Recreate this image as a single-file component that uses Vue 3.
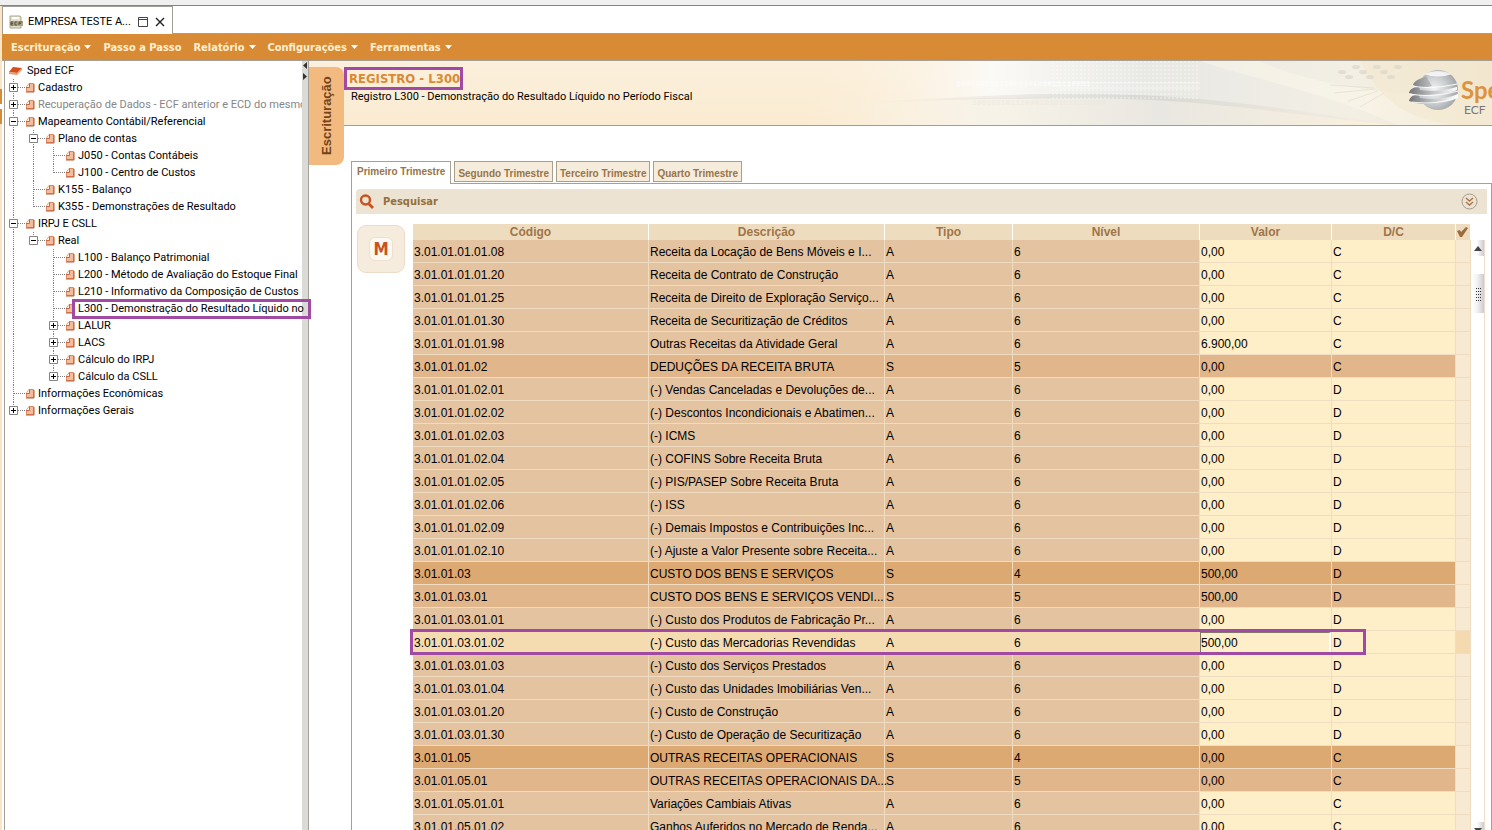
<script setup>
import { ref } from 'vue'

const menus = [
  { label: 'Escrituração', drop: true },
  { label: 'Passo a Passo', drop: false },
  { label: 'Relatório', drop: true },
  { label: 'Configurações', drop: true },
  { label: 'Ferramentas', drop: true },
]

// guides: one entry per indent column: 'v' full line, 't' branch, 'l' last branch, '' blank
const tree = [
  { label: 'Cadastro', guides: ['t'], box: '+' },
  { label: 'Recuperação de Dados - ECF anterior e ECD do mesmo', guides: ['t'], box: '+', dim: true },
  { label: 'Mapeamento Contábil/Referencial', guides: ['t'], box: '-' },
  { label: 'Plano de contas', guides: ['v', 't'], box: '-' },
  { label: 'J050 - Contas Contábeis', guides: ['v', 'v', 't'] },
  { label: 'J100 - Centro de Custos', guides: ['v', 'v', 'l'] },
  { label: 'K155 - Balanço', guides: ['v', 't'] },
  { label: 'K355 - Demonstrações de Resultado', guides: ['v', 'l'] },
  { label: 'IRPJ E CSLL', guides: ['t'], box: '-' },
  { label: 'Real', guides: ['v', 'l'], box: '-' },
  { label: 'L100 - Balanço Patrimonial', guides: ['v', '', 't'] },
  { label: 'L200 - Método de Avaliação do Estoque Final', guides: ['v', '', 't'] },
  { label: 'L210 - Informativo da Composição de Custos', guides: ['v', '', 't'] },
  { label: 'L300 - Demonstração do Resultado Líquido no', guides: ['v', '', 't'], selected: true },
  { label: 'LALUR', guides: ['v', '', 't'], box: '+' },
  { label: 'LACS', guides: ['v', '', 't'], box: '+' },
  { label: 'Cálculo do IRPJ', guides: ['v', '', 't'], box: '+' },
  { label: 'Cálculo da CSLL', guides: ['v', '', 'l'], box: '+' },
  { label: 'Informações Econômicas', guides: ['t'] },
  { label: 'Informações Gerais', guides: ['l'], box: '+' },
]

const tabs = ['Primeiro Trimestre', 'Segundo Trimestre', 'Terceiro Trimestre', 'Quarto Trimestre']
const activeTab = ref(0)

const rows = [
  ['3.01.01.01.01.08', 'Receita da Locação de Bens Móveis e I...', 'A', 6, '0,00', 'C'],
  ['3.01.01.01.01.20', 'Receita de Contrato de Construção', 'A', 6, '0,00', 'C'],
  ['3.01.01.01.01.25', 'Receita de Direito de Exploração Serviço...', 'A', 6, '0,00', 'C'],
  ['3.01.01.01.01.30', 'Receita de Securitização de Créditos', 'A', 6, '0,00', 'C'],
  ['3.01.01.01.01.98', 'Outras Receitas da Atividade Geral', 'A', 6, '6.900,00', 'C'],
  ['3.01.01.01.02', 'DEDUÇÕES DA RECEITA BRUTA', 'S', 5, '0,00', 'C'],
  ['3.01.01.01.02.01', '(-) Vendas Canceladas e Devoluções de...', 'A', 6, '0,00', 'D'],
  ['3.01.01.01.02.02', '(-) Descontos Incondicionais e Abatimen...', 'A', 6, '0,00', 'D'],
  ['3.01.01.01.02.03', '(-) ICMS', 'A', 6, '0,00', 'D'],
  ['3.01.01.01.02.04', '(-) COFINS Sobre Receita Bruta', 'A', 6, '0,00', 'D'],
  ['3.01.01.01.02.05', '(-) PIS/PASEP Sobre Receita Bruta', 'A', 6, '0,00', 'D'],
  ['3.01.01.01.02.06', '(-) ISS', 'A', 6, '0,00', 'D'],
  ['3.01.01.01.02.09', '(-) Demais Impostos e Contribuições Inc...', 'A', 6, '0,00', 'D'],
  ['3.01.01.01.02.10', '(-) Ajuste a Valor Presente sobre Receita...', 'A', 6, '0,00', 'D'],
  ['3.01.01.03', 'CUSTO DOS BENS E SERVIÇOS', 'S', 4, '500,00', 'D'],
  ['3.01.01.03.01', 'CUSTO DOS BENS E SERVIÇOS VENDI...', 'S', 5, '500,00', 'D'],
  ['3.01.01.03.01.01', '(-) Custo dos Produtos de Fabricação Pr...', 'A', 6, '0,00', 'D'],
  ['3.01.01.03.01.02', '(-) Custo das Mercadorias Revendidas', 'A', 6, '500,00', 'D'],
  ['3.01.01.03.01.03', '(-) Custo dos Serviços Prestados', 'A', 6, '0,00', 'D'],
  ['3.01.01.03.01.04', '(-) Custo das Unidades Imobiliárias Ven...', 'A', 6, '0,00', 'D'],
  ['3.01.01.03.01.20', '(-) Custo de Construção', 'A', 6, '0,00', 'D'],
  ['3.01.01.03.01.30', '(-) Custo de Operação de Securitização', 'A', 6, '0,00', 'D'],
  ['3.01.01.05', 'OUTRAS RECEITAS OPERACIONAIS', 'S', 4, '0,00', 'C'],
  ['3.01.01.05.01', 'OUTRAS RECEITAS OPERACIONAIS DA...', 'S', 5, '0,00', 'C'],
  ['3.01.01.05.01.01', 'Variações Cambiais Ativas', 'A', 6, '0,00', 'C'],
  ['3.01.01.05.01.02', 'Ganhos Auferidos no Mercado de Renda...', 'A', 6, '0,00', 'C'],
]
const editing = 17
const editValue = ref('500,00')
</script>

<template>
  <div class="window">
    <div class="topband"></div>
    <div class="body">
      <div class="edge"></div>
      <div class="app">
        <div class="doc-tabs">
          <div class="doc-tab">
            <svg class="doc-icon" width="15" height="14" viewBox="0 0 15 14">
              <path d="M1 1h10l1 1v11H1z" fill="#e4e0cc" stroke="#aaa58c" />
              <path d="M3 3h7" stroke="#fff" stroke-width="2" />
              <path d="M1 6h13v5H1z" fill="#aaa486" />
              <path d="M4 7H2v3h2M2 8.500h2M8 7H6v3h2M10 10V7h3M10 8.500h2" fill="none" stroke="#5b5740" />
            </svg>
            <span class="doc-title">EMPRESA TESTE A...</span>
            <button class="win-btn" aria-label="Restaurar">
              <svg width="11" height="10" viewBox="0 0 11 10"><path d="M.5.5h9v9h-9zM0 2.500h10" fill="none" stroke="#444" /></svg>
            </button>
            <button class="win-btn close" aria-label="Fechar">
              <svg width="10" height="10" viewBox="0 0 10 10"><path d="M1 1l8 8M9 1L1 9" stroke="#222" stroke-width="1.400" /></svg>
            </button>
          </div>
        </div>

        <nav class="menubar">
          <button v-for="m in menus" :key="m.label" class="menu">
            {{ m.label }}<svg v-if="m.drop" width="7" height="4" viewBox="0 0 7 4"><path d="M0 0h7L3.500 4z" fill="#fff" /></svg>
          </button>
        </nav>

        <div class="main">
          <aside class="tree">
            <div class="node root">
              <svg width="15" height="10" viewBox="0 0 15 10"><path d="M5 1l9 1-5 5-8-1z" fill="#d2501e" /><path d="M1 6l8 1 5-5v2L9 9 1 8z" fill="#e99a72" /></svg>
              <span>Sped ECF</span>
            </div>
            <div v-for="n in tree" :key="n.label" class="node">
              <span v-for="(g, i) in n.guides" :key="i" class="guide">
                <svg width="20" height="17" viewBox="0 0 20 17">
                  <path v-if="g" :d="g === 'l' ? 'M8.500 0V9' : 'M8.500 0V17'" class="dots" />
                  <path v-if="g === 't' || g === 'l'" d="M9 8.500H20" class="dots" />
                  <g v-if="n.box && i === n.guides.length - 1">
                    <path d="M4.500 4.500h8v8h-8z" fill="#fff" stroke="#848484" />
                    <path :d="n.box === '+' ? 'M6 8.500h5M8.500 6v5' : 'M6 8.500h5'" stroke="#000" fill="none" />
                  </g>
                </svg>
              </span>
              <svg class="leaf" width="10" height="10" viewBox="0 0 10 10">
                <path d="M4 .5h4.500v8H1.500V4z" fill="#f0bd9f" stroke="#d98a64" />
                <path d="M1 4.500h3.500V.5" fill="#fff4ec" stroke="#c9643c" />
                <path d="M9 1v8H1" stroke="#c4572c" fill="none" />
              </svg>
              <a href="#" class="label" :class="{ dim: n.dim, selected: n.selected }">{{ n.label }}<i v-if="n.selected" class="mark"></i></a>
            </div>
          </aside>
          <div class="splitter">
            <svg width="6" height="20" viewBox="0 0 6 20"><path d="M5 1v7L1 4.500z M1 12v7l4-3.500z" fill="#333" /></svg>
          </div>

          <section class="content">
            <header class="banner">
              <svg class="art" width="692" height="65" viewBox="0 0 692 65">
                <defs>
                  <linearGradient id="fade" x1="0" x2="1">
                    <stop offset="0" stop-color="#fbeed8" stop-opacity="0" />
                    <stop offset=".28" stop-color="#fbfaf6" />
                    <stop offset=".5" stop-color="#e8e8e5" />
                    <stop offset=".6" stop-color="#ebeae4" />
                    <stop offset=".8" stop-color="#f3efe4" />
                    <stop offset="1" stop-color="#efe3cc" />
                  </linearGradient>
                  <linearGradient id="under" x1="0" x2="1">
                    <stop offset="0" stop-color="#fbeed8" stop-opacity="0" />
                    <stop offset=".35" stop-color="#f6f2e8" />
                    <stop offset=".6" stop-color="#e9e7e1" />
                    <stop offset="1" stop-color="#fbf1de" />
                  </linearGradient>
                  <linearGradient id="wave" x1="0" x2="1">
                    <stop offset="0" stop-color="#cfccc4" stop-opacity="0" />
                    <stop offset=".55" stop-color="#cfcec9" />
                    <stop offset="1" stop-color="#e6e2d7" stop-opacity=".2" />
                  </linearGradient>
                  <radialGradient id="ball" cx=".4" cy=".5" r=".65">
                    <stop offset="0" stop-color="#f4f5f5" />
                    <stop offset=".5" stop-color="#cccfd1" />
                    <stop offset="1" stop-color="#9a9da0" />
                  </radialGradient>
                  <linearGradient id="fin" x1="0" x2="1">
                    <stop offset="0" stop-color="#727477" />
                    <stop offset=".5" stop-color="#c4c6c8" />
                    <stop offset="1" stop-color="#fff" />
                  </linearGradient>
                  <pattern id="dotgrid" width="4" height="4" patternUnits="userSpaceOnUse"><path d="M0 0h2v2H0z" fill="#fff" fill-opacity=".3" /></pattern>
                </defs>
                <path d="M0 0h692v65H0z" fill="url(#fade)" />
                <path d="M0 42C80 41 160 36 250 36S400 38 450 45S560 60 600 65H0z" fill="url(#under)" />
                <path d="M60 42C160 36 220 32 300 33S460 42 590 64C500 54 420 42 350 39S160 38 60 42z" fill="url(#wave)" opacity=".6" />
                <path d="M250 0h148v38H250z" fill="url(#dotgrid)" />
                <path d="M240 22h160M260 27h140" stroke="#fff" stroke-width="2" opacity=".3" />
                <path d="M400 0c60 20 120 30 200 65h92V34C600 40 500 20 460 0z" fill="#fdf8ec" opacity=".45" />
                <path d="M572 20c20 26 40 38 80 44h40V0H560z" fill="#f3e7cf" opacity=".6" />
                <g fill="#ddd7ca" opacity=".7">
                  <ellipse v-for="i in 9" :key="i" :cx="535 + i * 7" :cy="6 + (i % 3) * 5" rx="4" ry="2" />
                </g>
                <g stroke="#e3ddcf" fill="none" opacity=".7"><path d="M530 24l44 3M534 32l40-4M548 40l30-10M560 46l24-14" /></g>
                <g class="binary">
                  <text x="156" y="25" fill="#fff">1001001011100010101011110001</text>
                  <text x="172" y="44" fill="#ece9e1">1001001011100010101011110001</text>
                </g>
                <circle cx="638" cy="29" r="20" fill="url(#ball)" />
                <path d="M624 13q14-6 28 0-14 5-28 0z" fill="#fff" opacity=".8" />
                <path d="M613 24c1-5 8-6 13-9l6 10c-7 2-15 2-19-1zM609 32c1-5 6-6 10-6l1 3c14 2 26 0 37-3v3c-14 5-36 7-48 3zM609 40c1-5 6-7 10-6l1 3c14 2 26 1 38-4v4c-14 6-36 8-49 3z" fill="url(#fin)" />
                <path d="M613 25c14 3 30 1 44-2M610 33c16 3 34 1 48-3M612 41c16 2 32 1 44-5" stroke="#fff" stroke-opacity=".9" fill="none" />
                <text x="661" y="38" class="sped">Sped</text>
                <text x="664" y="53" class="ecf">ECF</text>
              </svg>
              <div class="titles">
                <h1>REGISTRO - L300<i class="mark"></i></h1>
                <p>Registro L300 - Demonstração do Resultado Líquido no Período Fiscal</p>
              </div>
            </header>
            <button class="side-tab">Escrituração</button>

            <div class="work">
              <div class="tabs" role="tablist">
                <button v-for="(t, i) in tabs" :key="t" role="tab" class="tab" :class="{ active: i === activeTab }" :aria-selected="i === activeTab" @click="activeTab = i">{{ t }}</button>
              </div>
              <div class="panel">
                <div class="search">
                  <svg width="16" height="16" viewBox="0 0 16 16"><circle cx="6.500" cy="6" r="4.500" fill="none" stroke="#c9521f" stroke-width="2.400" /><path d="M9.500 9.500L14 14" stroke="#c9521f" stroke-width="2.800" /></svg>
                  <span>Pesquisar</span>
                  <button class="expand" aria-label="Expandir">
                    <svg width="17" height="17" viewBox="0 0 17 17"><circle cx="8.500" cy="8.500" r="7.500" fill="none" stroke="#a39d8e" /><path d="M5 5l3.500 3L12 5M5 9l3.500 3L12 9" fill="none" stroke="#a8744a" stroke-width="1.400" /></svg>
                  </button>
                </div>
                <div class="grid-area">
                  <button class="m-btn"><span>M</span></button>
                  <div class="table-wrap">
                    <table>
                      <colgroup><col /><col /><col class="c-tipo" /><col class="c-nivel" /><col class="c-valor" /><col class="c-dc" /><col class="c-chk" /></colgroup>
                      <thead>
                        <tr>
                          <th>Código</th><th>Descrição</th><th>Tipo</th><th>Nível</th><th>Valor</th><th>D/C</th>
                          <th aria-label="Marcado"><svg width="12" height="10" viewBox="0 0 12 10"><path d="M1 4l3-1 1 2 5-5 2 1-6 9H4z" fill="#9b6b3c" /></svg></th>
                        </tr>
                      </thead>
                      <tbody>
                        <tr v-for="(r, i) in rows" :key="r[0]" :class="['n' + r[3], { current: i === editing }]">
                          <td><i v-if="i === editing" class="mark"></i>{{ r[0] }}</td>
                          <td>{{ r[1] }}</td>
                          <td>{{ r[2] }}</td>
                          <td>{{ r[3] }}</td>
                          <td class="ed"><input v-if="i === editing" v-model="editValue" aria-label="Valor" /><template v-else>{{ r[4] }}</template></td>
                          <td class="ed">{{ r[5] }}</td>
                          <td class="chk"></td>
                        </tr>
                      </tbody>
                    </table>
                  </div>
                  <div class="scroll">
                    <button class="sb" aria-label="Subir"><svg width="8" height="5" viewBox="0 0 8 5"><path d="M0 5l4-5 4 5z" fill="#444" /></svg></button>
                    <div class="thumb"><i v-for="k in 15" :key="k"></i></div>
                    <button class="sb down" aria-label="Descer"><svg width="8" height="5" viewBox="0 0 8 5"><path d="M0 0h8L4 5z" fill="#444" /></svg></button>
                  </div>
                </div>
              </div>
            </div>
          </section>
        </div>
      </div>
    </div>
  </div>
</template>

<style>
body { margin: 0; background: #fff; }
</style>

<style scoped>
* { box-sizing: border-box; }
button { border: 0; background: none; padding: 0; margin: 0; font: inherit; color: inherit; cursor: pointer; }
svg { display: block; flex: none; }
.window { height: 100vh; display: flex; flex-direction: column; overflow: hidden; background: #fff; color: #000; font: 11px/17px Roboto, "DejaVu Sans Condensed", sans-serif; }
.topband { height: 6px; flex: none; background: #f0f0f0; border-bottom: 1px solid #858585; }
.body { flex: 1; min-height: 0; display: flex; }
.edge { width: 2px; flex: none; background: linear-gradient(#fce5c4 83px, #d98a35 83px, #d98a35 98px, #fff 98px, #fff 103px, #d98a35 103px, #d98a35 118px, #fce5c4 118px); }
.app { flex: 1; min-width: 0; display: flex; flex-direction: column; }
.doc-tabs { height: 28px; flex: none; display: flex; border-bottom: 1px solid #a0a098; }
.doc-tab { display: flex; align-items: center; width: 171px; height: 28px; padding: 2px 7px 0 6px; border: 1px solid #a0a098; border-bottom: 0; background: #fff; }
.doc-title { margin-left: 4px; flex: 1; white-space: nowrap; }
.win-btn { margin-left: 6px; }
.menubar { height: 26px; flex: none; display: flex; align-items: center; gap: 12px; padding-left: 9px; background: #d98a35; color: #fff0d0; font: bold 11px/17px "DejaVu Sans Condensed", "DejaVu Sans", sans-serif; }
.menu { display: flex; align-items: center; gap: 4px; white-space: nowrap; }
.main { flex: 1; min-height: 0; display: flex; border-top: 1px solid #a5a196; }
.tree { width: 298px; margin-left: 2px; flex: none; border-left: 1px solid #a5a196; padding-top: 1px; }
.node { display: flex; align-items: center; height: 17px; }
.root { padding-left: 3px; gap: 4px; }
.guide { width: 20px; }
.dots { stroke: #808080; stroke-dasharray: 1 1; fill: none; }
.leaf { margin: 0 3px 0 0; }
.label { position: relative; color: #000; text-decoration: none; white-space: nowrap; }
.dim { color: #868686; min-width: 0; overflow: hidden; }
.selected { border-bottom: 1px dotted #000; line-height: 15px; }
.mark { position: absolute; border: 3px solid #a14aa3; pointer-events: none; }
.label .mark { z-index: 2; }
.splitter { width: 7px; flex: none; background: #dadad7; border-right: 1px solid #a5a196; }
.content { position: relative; flex: 1; min-width: 0; display: flex; flex-direction: column; }
.banner { position: relative; height: 65px; flex: none; overflow: hidden; border-bottom: 1px solid #a39c90; background: linear-gradient(#fcf0dc, #faebd1); }
.art { position: absolute; right: 0; top: 0; }
.binary { font: bold 8px "Liberation Mono", monospace; opacity: .7; }
.sped { font: bold 24px Lato, sans-serif; fill: #dc9340; }
.ecf { font: 12px Lato, sans-serif; fill: #77777a; }
.titles { position: relative; padding: 9px 0 0 40px; }
h1 { position: relative; display: block; width: max-content; margin: 0; font: bold 13px/18px "DejaVu Sans Condensed", "DejaVu Sans", sans-serif; color: #d98a35; }
p { margin: 0 0 0 2px; }
.side-tab { position: absolute; left: 0; top: 6px; width: 35px; height: 98px; border-radius: 8px 0 0 8px; background: #f2ba7f; color: #74431b; font: bold 13px/35px "Liberation Sans", Arial, sans-serif; writing-mode: vertical-rl; transform: rotate(180deg); }
.work { flex: 1; min-height: 0; display: flex; flex-direction: column; padding: 35px 0 0 42px; }
.tabs { display: flex; align-items: flex-start; gap: 3px; height: 22px; flex: none; }
.tab { height: 21px; padding: 4px 3px 0; border: 1px solid #aaa089; background: #f6ecdb; color: #987448; font: bold 10px/16px "Liberation Sans", Arial, sans-serif; white-space: nowrap; }
.tab.active { height: 23px; padding: 0 5px 2px; border-color: #a5a196; border-bottom: 0; background: #fff; position: relative; }
.panel { flex: 1; min-height: 0; display: flex; flex-direction: column; border: 1px solid #a5a196; border-bottom: 0; padding: 5px 4px 0; }
.search { height: 25px; flex: none; display: flex; align-items: center; gap: 8px; padding: 0 9px 0 3px; border-radius: 4px 0 0 0; background: #ede3d2; color: #94703f; font: bold 11px/25px "DejaVu Sans Condensed", "DejaVu Sans", sans-serif; }
.expand { margin-left: auto; }
.grid-area { flex: 1; min-height: 0; display: flex; padding-top: 10px; }
.m-btn { width: 48px; height: 48px; margin: 1px 0 0 1px; flex: none; border: 1px solid #eddcc9; border-radius: 9px; background: #f5ecdd; display: flex; align-items: center; justify-content: center; }
.m-btn span { width: 24px; height: 24px; border: 1px solid #eee0cd; border-radius: 6px; background: #fcf8f2; color: #c9521f; font: bold 17px/22px "DejaVu Sans Condensed", sans-serif; }
.table-wrap { flex: 1; min-width: 0; overflow: hidden; padding-left: 8px; }
table { width: 100%; table-layout: fixed; border-collapse: separate; border-spacing: 0; font: 12px/20px "Liberation Sans", Arial, sans-serif; }
.c-tipo { width: 128px; }
.c-nivel { width: 187px; }
.c-valor { width: 132px; }
.c-dc { width: 124px; }
.c-chk { width: 15px; }
th { height: 16px; padding: 0; line-height: 16px; background: #eedcbf; color: #a07449; font-weight: bold; border-right: 1px solid #fff; }
td { height: 23px; padding: 2px 0 0 1px; border-right: 1px solid #f0dcc0; border-bottom: 1px solid #f0dcc0; background: #e3c3a0; white-space: nowrap; }
.n6 .ed { background: #feefc8; }
.n5 td { background: #e2b68b; }
.n4 td { background: #dda972; }
.current { position: relative; }
.current td { background: #f5dcb0; }
tr .chk { background: #f8ead2; }
.current .chk { background: #f5dab0; }
td input { display: block; box-sizing: border-box; width: 100%; height: 21px; padding: 0; border: 1px solid #817a68; border-right: 2px solid #fff; border-bottom: 0; background: #feefc8; font: inherit; outline: 0; }
tr.current td:has(input) { padding: 1px 0 0; }
.scroll { width: 13px; flex: none; margin: 16px 2px 0 1px; border-right: 1px solid #f0dcc8; display: flex; flex-direction: column; }
.sb { height: 16px; width: 12px; display: flex; align-items: center; justify-content: center; background: linear-gradient(90deg, #fff, #fff 40%, #ccc); }
.thumb { height: 39px; margin-top: 18px; padding-top: 14px; display: grid; grid-template-columns: 1px 1px 1px; grid-auto-rows: 1px; gap: 2px 1px; justify-content: center; background: linear-gradient(90deg, #fff, #f4f4f4 40%, #ccc); }
.thumb i { background: #333; }
.down { margin-top: auto; margin-bottom: -8px; }
h1 .mark { left: -5px; top: -3px; right: -3px; bottom: -2px; }
.label .mark { left: -6px; top: -2px; right: -7px; bottom: -3px; }
.current .mark { left: -3px; right: 105px; top: -2px; bottom: -1px; }
</style>
